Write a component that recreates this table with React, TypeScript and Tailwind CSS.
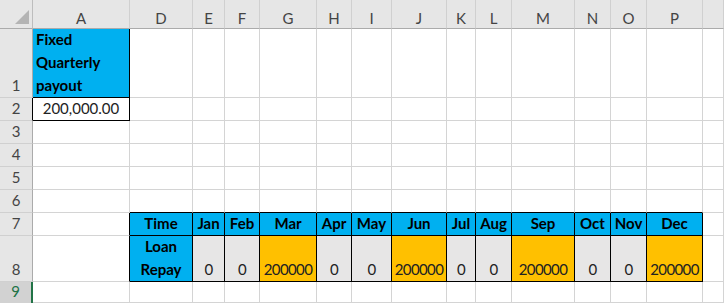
type Cell = {
  text: string;
  fill?: "blue" | "gold" | "gray";
  bold?: boolean;
  align?: "left" | "center";
  num?: boolean;
};

const columns = ["A", "D", "E", "F", "G", "H", "I", "J", "K", "L", "M", "N", "O", "P", ""];
const rows = [1, 2, 3, 4, 5, 6, 7, 8, 9];

const months = ["Jan", "Feb", "Mar", "Apr", "May", "Jun", "Jul", "Aug", "Sep", "Oct", "Nov", "Dec"];
const repay = ["0", "0", "200000", "0", "0", "200000", "0", "0", "200000", "0", "0", "200000"];

const cells: Record<string, Cell> = {
  A1: { text: "Fixed\nQuarterly\npayout", fill: "blue", bold: true, align: "left" },
  A2: { text: "200,000.00" },
  D7: { text: "Time", fill: "blue", bold: true },
  D8: { text: "Loan\nRepay", fill: "blue", bold: true },
};
months.forEach((m, i) => {
  const col = columns[i + 2];
  cells[col + "7"] = { text: m, fill: "blue", bold: true };
  cells[col + "8"] = { text: repay[i], fill: repay[i] === "0" ? "gray" : "gold", num: true };
});

// cells that carry a thin black box
const boxed = (c: number, r: number) => {
  if (c === 0 && (r === 1 || r === 2)) return true;
  if (c >= 1 && c <= 13 && (r === 7 || r === 8)) return true;
  return false;
};

const fillClass = {
  blue: "bg-[#00b0f0]",
  gold: "bg-[#ffc000]",
  gray: "bg-[#e7e6e6]",
};

function Corner() {
  return (
    <div className="flex items-end justify-end border-r border-b border-r-[#bdbdbd] border-b-[#ababab] bg-[#e6e6e6] pr-[3px] pb-[4px]">
      <svg width="14" height="14" viewBox="0 0 14 14">
        <polygon points="0,14 14,0 14,14" fill="#b4b4b4" />
      </svg>
    </div>
  );
}

export default function App() {
  return (
    <div className="h-[303px] w-[724px] overflow-hidden bg-white font-['Lato',sans-serif] text-[15px]">
      <div className="grid grid-cols-[33px_97px_63px_32px_35px_57px_35px_40px_55px_29px_36px_63px_36px_36px_56px_21px] grid-rows-[29px_69px_23px_23px_23px_23px_23px_23px_46px_21px]">
        <Corner />
        {columns.map((col, i) => (
          <div
            key={"h" + i}
            className="flex items-end justify-center border-r border-b border-r-[#d0d0d0] border-b-[#ababab] bg-[#e6e6e6] leading-[20px] text-[#444444]"
          >
            {col}
          </div>
        ))}
        {rows.map((r) => (
          <Row key={r} r={r} />
        ))}
      </div>
    </div>
  );
}

function Row({ r }: { r: number }) {
  const selected = r === 9;
  const headBorder = r === 2 ? "border-r-black" : "border-r-[#ababab]";
  return (
    <>
      <div
        className={
          selected
            ? "flex items-end justify-center border-r-2 border-r-[#217346] bg-[#d2d2d2] leading-[23px] text-[#217346]"
            : `flex items-end justify-center border-r border-b border-b-[#d0d0d0] ${headBorder} bg-[#e6e6e6] leading-[23px] text-[#444444]`
        }
      >
        {r}
      </div>
      {columns.map((col, c) => {
        const cell = cells[col + r];
        const right = boxed(c, r) || boxed(c + 1, r) ? "border-r-black" : "border-r-[#d4d4d4]";
        const bottom = boxed(c, r) || boxed(c, r + 1) ? "border-b-black" : "border-b-[#d4d4d4]";
        return (
          <div
            key={c}
            className={`flex items-end border-r border-b ${right} ${bottom} ${
              cell?.fill ? fillClass[cell.fill] : "bg-white"
            } ${cell?.align === "left" ? "justify-start pl-[3px] text-left" : "justify-center text-center"}`}
          >
            {cell && (
              <span
                className={`whitespace-pre-line leading-[23px] ${
                  cell.bold ? "font-bold text-black" : "text-[#222222]"
                } ${cell.num ? "tracking-[-0.6px]" : ""}`}
              >
                {cell.text}
              </span>
            )}
          </div>
        );
      })}
    </>
  );
}
